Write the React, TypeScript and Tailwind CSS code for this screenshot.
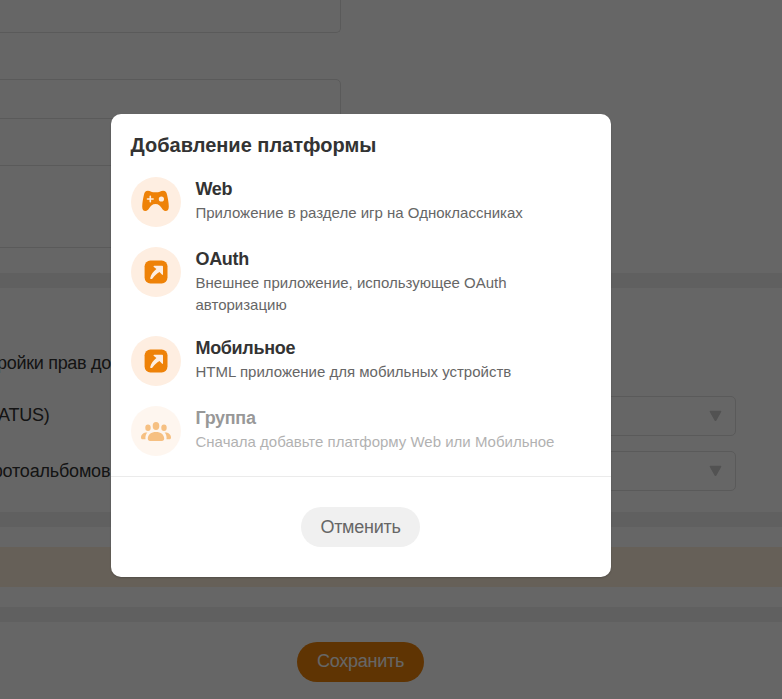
import type { ReactNode } from "react";

function GamepadIcon() {
  return (
    <svg width="50" height="50" viewBox="0 0 50 50" fill="currentColor">
      <path
        fillRule="evenodd"
        d="M16.900 13.700c2.500 0 3.300 1.500 5.300 1.500h4.600c2 0 2.800-1.500 5.300-1.500 2.300 0 3.400 1.400 4 4.200.8 3.400 1.700 8.300 1.700 11.600 0 3-1.100 4.500-3.200 4.500-1.900 0-2.900-1.300-3.900-2.900-1.600-2.600-3-4.200-6.200-4.200s-4.600 1.600-6.200 4.200c-1 1.600-2 2.900-3.900 2.900-2.100 0-3.200-1.500-3.200-4.500 0-3.300.9-8.200 1.700-11.600.6-2.800 1.700-4.200 4-4.200zM18.500 19.200v2h-2a.8.8 0 0 0 0 1.600h2v2a.8.8 0 0 0 1.600 0v-2h2a.8.8 0 0 0 0-1.600h-2v-2a.8.8 0 0 0-1.600 0zM30.400 19.400a2.600 2.600 0 1 0 0 5.200 2.600 2.600 0 0 0 0-5.200z"
      />
    </svg>
  );
}

function ArrowIcon() {
  return (
    <svg width="50" height="50" viewBox="0 0 50 50">
      <rect x="13.600" y="13.500" width="22.900" height="22.900" rx="5.800" fill="currentColor" />
      <path
        d="M23.200 18.700H31.200c.5 0 .8.300.8.8v7.700c0 .7-.7.900-1.100.4L28.500 24.900c-2.900 1.600-4.600 3.400-6.800 6.300-.5.600-.9.900-1.500.9-.8 0-1.100-.5-.9-1.300.9-3.700 2.900-6.500 6.100-8.900l-2.500-1.900c-.6-.5-.4-1.300.3-1.300z"
        fill="#fdeee2"
      />
    </svg>
  );
}

function GroupIcon() {
  return (
    <svg width="50" height="50" viewBox="0 0 50 50" fill="currentColor">
      <ellipse cx="25" cy="20" rx="3.300" ry="3.900" />
      <ellipse cx="17" cy="21.700" rx="2.700" ry="3.200" />
      <ellipse cx="33" cy="21.700" rx="2.700" ry="3.200" />
      <path d="M25 25.900c4.800 0 8.200 2.500 8.200 6.700 0 1.600-.8 2.400-2.300 2.400H19.100c-1.500 0-2.300-.8-2.300-2.400 0-4.200 3.400-6.700 8.200-6.700z" />
      <path d="M16.400 26.400c-1.500 1.600-2.300 3.800-1.900 6.900h-2.800c-1.200 0-1.700-.6-1.700-1.800 0-3.100 2.400-5.200 6.400-5.100zM33.600 26.400c1.500 1.600 2.300 3.800 1.900 6.900h2.800c1.200 0 1.700-.6 1.700-1.800 0-3.100-2.400-5.200-6.400-5.100z" />
    </svg>
  );
}

interface OptionProps {
  icon: ReactNode;
  title: string;
  children: ReactNode;
  disabled?: boolean;
}

function PlatformOption({ icon, title, children, disabled = false }: OptionProps) {
  return (
    <button
      type="button"
      disabled={disabled}
      className={`flex w-full items-start gap-[14.5px] text-left ${disabled ? "opacity-50" : ""}`}
    >
      <span className="size-[50px] shrink-0 rounded-full bg-[#feeee1] text-[#ee8208]">{icon}</span>
      <span className="flex flex-col">
        <span className="h-[25px] text-[18px] leading-[24px] font-bold tracking-[-0.33px] text-[#333]">{title}</span>
        <span className="text-[15px] leading-[22px] text-[#666]">{children}</span>
      </span>
    </button>
  );
}

function Permission({ children }: { children: ReactNode }) {
  return (
    <div className="flex h-10 items-center justify-between">
      <span className="whitespace-nowrap text-[18px] leading-6 tracking-[-0.2px]">{children}</span>
      <span className="flex h-10 w-[336px] items-center justify-end rounded-[5px] border border-[#e0e0e0] pr-[13px]">
        <svg width="13" height="12" viewBox="0 0 13 12" fill="#ccc">
          <path d="M1.500.8h10c.8 0 1.100.7.700 1.300l-4.800 8.300c-.4.700-1.400.7-1.800 0L.8 2.100C.4 1.500.7.8 1.500.8z" />
        </svg>
      </span>
    </div>
  );
}

function SettingsPage() {
  return (
    <div className="flex h-full flex-col bg-white text-[#333]">
      <section className="flex h-[273px] shrink-0 flex-col items-start">
        <div className="-ml-2 h-[33px] w-[349px] rounded-b-[5px] border border-t-0 border-[#e0e0e0]" />
        <div className="-ml-2 mt-[46px] h-10 w-[349px] rounded-[5px] border border-[#e0e0e0]" />
        <div className="-ml-2 mt-[46px] h-[83px] w-[349px] rounded-[5px] border border-[#e0e0e0]" />
      </section>
      <div className="h-[15px] shrink-0 bg-[#f0f0f0]" />
      <section className="h-[224px] shrink-0 pt-[63px] pr-[46px]">
        <h2 className="-ml-[3px] whitespace-nowrap text-[18px] leading-6 tracking-[-0.3px]">ройки прав до</h2>
        <div className="mt-[21px] flex flex-col gap-[15px]">
          <div className="-ml-[2px]">
            <Permission>
              <span className="block pb-0.5">ATUS)</span>
            </Permission>
          </div>
          <div className="-ml-[12px]">
            <Permission>фотоальбомов</Permission>
          </div>
        </div>
      </section>
      <div className="h-[15px] shrink-0 bg-[#f0f0f0]" />
      <section className="h-20 shrink-0 py-5">
        <div className="h-10 bg-[#fff0dc]" />
      </section>
      <div className="h-[15px] shrink-0 bg-[#f0f0f0]" />
      <footer className="flex grow items-start pt-5 pl-[297px]">
        <button type="button" className="h-10 w-[127px] rounded-full bg-[#ee8208] pb-0.5 text-[18px] leading-6 tracking-[-0.25px] text-white">
          Сохранить
        </button>
      </footer>
    </div>
  );
}

export default function App() {
  return (
    <main className="relative h-[699px] w-[782px] overflow-hidden font-['Liberation_Sans',Arial,sans-serif]">
      <SettingsPage />
      <div className="absolute inset-0 bg-black/60 pt-[114px] pl-[111px]">
        <div role="dialog" className="h-[463px] w-[500px] rounded-[10px] bg-white shadow-[0_1px_2px_rgba(0,0,0,0.2)]">
          <div className="h-[363px] border-b border-[#ebebeb] px-5 pt-[19px]">
            <h1 className="-ml-[0.5px] text-[20px] leading-6 font-bold text-[#333]">Добавление платформы</h1>
            <div className="mt-5 flex flex-col">
              <div className="h-[70px]">
                <PlatformOption icon={<GamepadIcon />} title="Web">Приложение в разделе игр на Одноклассниках</PlatformOption>
              </div>
              <div className="h-[89px]">
                <PlatformOption icon={<ArrowIcon />} title="OAuth">
                  Внешнее приложение, использующее OAuth
                  <br />
                  авторизацию
                </PlatformOption>
              </div>
              <div className="h-[70px]">
                <PlatformOption icon={<ArrowIcon />} title="Мобильное">HTML приложение для мобильных устройств</PlatformOption>
              </div>
              <PlatformOption icon={<GroupIcon />} title="Группа" disabled>
                Сначала добавьте платформу Web или Мобильное
              </PlatformOption>
            </div>
          </div>
          <div className="pt-[30px] pl-[190px]">
            <button type="button" className="h-10 w-[119px] rounded-full bg-[#f0f0f0] text-[18px] leading-6 tracking-[-0.25px] text-[#666]">
              Отменить
            </button>
          </div>
        </div>
      </div>
    </main>
  );
}
